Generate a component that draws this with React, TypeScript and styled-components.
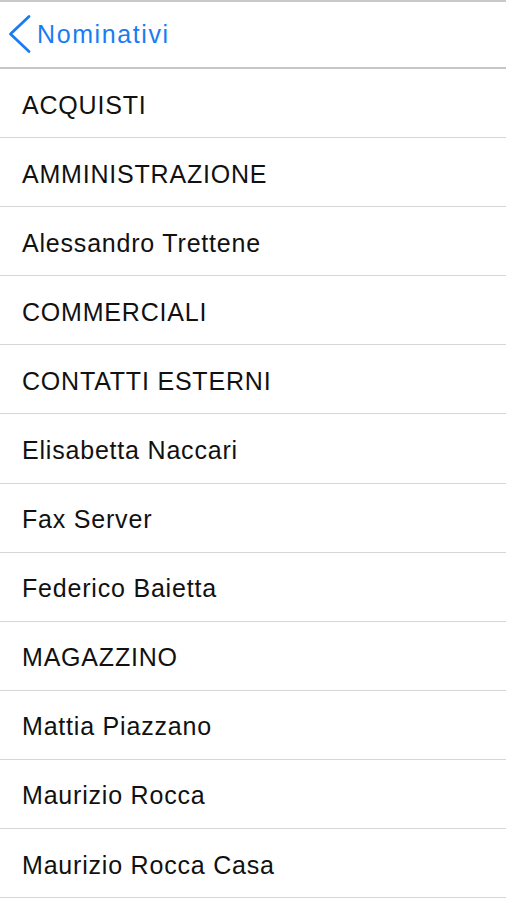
import React from "react";
import styled, { createGlobalStyle } from "styled-components";

const GlobalStyle = createGlobalStyle`
  html, body {
    margin: 0;
    padding: 0;
    background: #ffffff;
  }
  body {
    font-family: "Liberation Sans", Arial, Helvetica, sans-serif;
    -webkit-font-smoothing: antialiased;
  }
`;

const Screen = styled.div`
  width: 506px;
  height: 900px;
  overflow: hidden;
  background: #ffffff;
  border-top: 2px solid #c9c9c9;
  box-sizing: border-box;
`;

const NavBar = styled.header`
  height: 67px;
  display: flex;
  align-items: center;
  gap: 5px;
  padding: 0 0 1px 8px;
  box-sizing: border-box;
  border-bottom: 2px solid #c6c6c6;
  background: #ffffff;
`;

const BackIcon = styled.svg`
  width: 24px;
  height: 40px;
  flex: none;
`;

const BackLabel = styled.span`
  font-size: 25px;
  letter-spacing: 1.6px;
  color: #1a7cf4;
`;

const List = styled.ul`
  list-style: none;
  margin: 0;
  padding: 0;
`;

const Row = styled.li`
  height: 69.1px;
  box-sizing: border-box;
  display: flex;
  align-items: center;
  padding: 4px 0 0 22px;
  border-bottom: 1.5px solid #d6d6d6;
  font-size: 25px;
  letter-spacing: 0.8px;
  color: #111111;
`;

const names = [
  "ACQUISTI",
  "AMMINISTRAZIONE",
  "Alessandro Trettene",
  "COMMERCIALI",
  "CONTATTI ESTERNI",
  "Elisabetta Naccari",
  "Fax Server",
  "Federico Baietta",
  "MAGAZZINO",
  "Mattia Piazzano",
  "Maurizio Rocca",
  "Maurizio Rocca Casa",
];

export default function App() {
  return (
    <>
      <GlobalStyle />
      <Screen>
        <NavBar>
          <BackIcon viewBox="0 0 24 40" aria-hidden="true">
            <polyline
              points="21,2.5 2.5,20 21,37.5"
              fill="none"
              stroke="#1a7cf4"
              strokeWidth={2.8}
              strokeLinecap="round"
              strokeLinejoin="round"
            />
          </BackIcon>
          <BackLabel>Nominativi</BackLabel>
        </NavBar>
        <List>
          {names.map((n) => (
            <Row key={n}>{n}</Row>
          ))}
        </List>
      </Screen>
    </>
  );
}
